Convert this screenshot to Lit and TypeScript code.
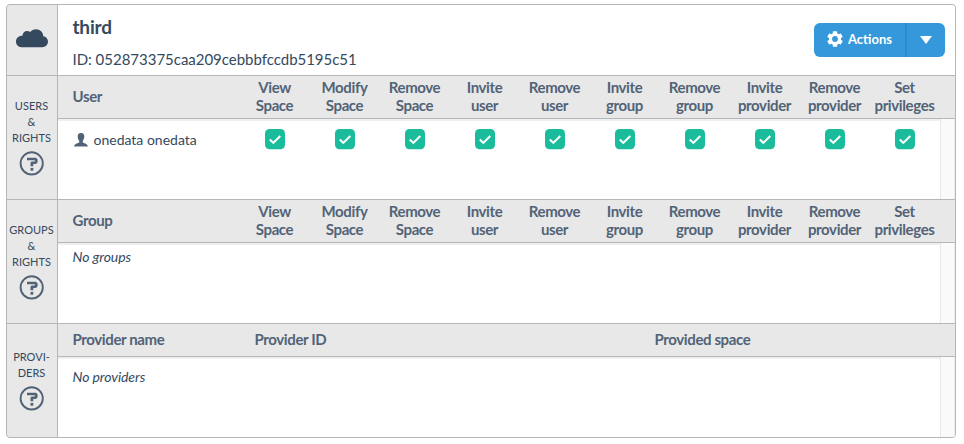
import { LitElement, html, svg, css } from "lit";
import { customElement } from "lit/decorators.js";

const PRIVILEGES = [
  ["View", "Space"],
  ["Modify", "Space"],
  ["Remove", "Space"],
  ["Invite", "user"],
  ["Remove", "user"],
  ["Invite", "group"],
  ["Remove", "group"],
  ["Invite", "provider"],
  ["Remove", "provider"],
  ["Set", "privileges"],
];

const helpIcon = html`<svg class="help" width="26" height="26" viewBox="0 0 26 26">
  <circle cx="12.700" cy="13.400" r="11.100" fill="none" stroke="#526377" stroke-width="1.900"></circle>
  <path d="M8 7.700H17L18.600 9.300V12.300L17 13.900H14.300V16.200H11.500V12.500L12.700 11.500H15.800V10.200H8Z" fill="#526377"></path>
  <rect x="11.500" y="17.900" width="2.800" height="2.800" fill="#526377"></rect>
</svg>`;

const cloudIcon = html`<svg width="32" height="19" viewBox="0 0 32 19">
  <path fill="#34495e" d="M5.500 18.300C2.300 18.300 0 15.900 0 12.600C0 9.300 2.400 6.700 6.400 6.700C6.800 3.800 8.600 1.900 11 1.900C12.200 1.900 13.300 2.200 14.300 2.900C15.600 1.200 17.600 .2 20 .2C24.100 .2 27.200 3.200 27.300 7.300C30 7.700 32 9.900 32 12.600C32 15.800 29.500 18.300 26.300 18.300Z"></path>
</svg>`;

const userIcon = html`<svg class="person" width="14" height="14" viewBox="0 0 14 14">
  <path fill="#526377" d="M7 0C9.300 0 10.500 1.500 10.300 3.800C10.200 5.600 9.600 6.900 8.800 7.700V9.300C9.100 10.300 13.700 10.500 13.900 13.500H.1C.3 10.500 4.900 10.300 5.200 9.300V7.700C4.400 6.900 3.800 5.600 3.700 3.800C3.500 1.500 4.700 0 7 0Z"></path>
</svg>`;

const teeth = [0, 60, 120, 180, 240, 300].map(
  (a) => svg`<rect x="-2.200" y="-7.800" width="4.400" height="4" rx=".6" transform="rotate(${a})"></rect>`
);
const gearIcon = html`<svg width="16" height="16" viewBox="-8 -8 16 16" fill="#fff">
  ${teeth}
  <circle r="4.500" fill="none" stroke="#fff" stroke-width="3.200"></circle>
</svg>`;

const checkIcon = html`<svg class="check" width="20" height="21" viewBox="0 0 20 21">
  <rect width="20" height="20.300" rx="4.500" fill="#1abc9c"></rect>
  <path d="M4.800 10.500l3.500 3.400 7-6.800" fill="none" stroke="#fff" stroke-width="2.100"></path>
</svg>`;

@customElement("app-root")
export class AppRoot extends LitElement {
  static styles = css`
    :host {
      display: block;
      height: 444px;
      box-sizing: border-box;
      padding: 4px 8px 0 6px;
      background: #fff;
      color: #34495e;
      font: 14px/18px Lato, sans-serif;
    }
    .panel {
      box-sizing: border-box;
      height: 434px;
      border: 1px solid #b4b6b8;
      border-radius: 4px;
      overflow: hidden;
      display: grid;
      grid-template-columns: 50px 1fr;
      grid-template-rows: 70px 123px 123px 113px;
      gap: 1px;
      background: #b4b6b8;
    }
    .side {
      background: #e8e8e8;
      display: flex;
      flex-direction: column;
      align-items: center;
      justify-content: center;
      text-align: center;
      font-size: 11px;
      line-height: 16px;
      padding: 0 1px 2px 0;
    }
    .side.cloud { padding: 0 0 3px; }
    .help { margin-top: 4px; }
    .title {
      background: #fff;
      display: flex;
      justify-content: space-between;
      padding: 0 10px 0 14.500px;
    }
    h1 {
      margin: 10px 0 0;
      font-size: 19px;
      line-height: 24px;
      font-weight: 700;
      letter-spacing: -0.2px;
    }
    .id {
      margin-top: 10px;
      font-size: 15px;
      line-height: 20px;
      letter-spacing: -0.020px;
    }
    .button {
      margin-top: 18px;
      display: flex;
      width: 131px;
      height: 34px;
      border-radius: 6px;
      overflow: hidden;
      background: #3498db;
      color: #fff;
      font-weight: 700;
      font-size: 13px;
    }
    .main {
      width: 91px;
      display: flex;
      align-items: center;
      gap: 5px;
      padding: 0 0 2px 13px;
      box-sizing: border-box;
    }
    .toggle {
      flex: 1;
      display: flex;
      align-items: center;
      justify-content: center;
      border-left: 2px solid #2f89c5;
    }
    .section {
      background: #fff;
      display: flex;
      flex-direction: column;
    }
    .head {
      height: 42px;
      background: #e8e8e8;
      border-bottom: 1px solid #b4b6b8;
      color: #526377;
      font-weight: 700;
      font-size: 15px;
      letter-spacing: -0.38px;
      display: grid;
      align-items: center;
    }
    .grid { grid-template-columns: 182px repeat(10, 70px); }
    .grid > * { text-align: center; }
    .grid > .first { text-align: left; padding-left: 14.500px; }
    .head .cell { margin-left: -1px; margin-top: -2px; }
    .head .first { margin-top: -2px; }
    .head.providers {
      height: 32px;
      grid-template-columns: 182px 400px 1fr;
      padding-left: 14.500px;
    }
    .head.providers > * { margin-top: -2px; }
    .body { flex: 1; display: flex; }
    .content {
      width: 882px;
      border-top: 2px solid #efefef;
      box-sizing: border-box;
    }
    .scroll {
      flex: 1;
      background: #fafafa;
      border-left: 1px solid #e7e7e7;
      border-right: 1px solid #ededed;
    }
    .row { display: grid; align-items: center; padding-top: 8px; }
    .row.grid > .first { display: flex; align-items: center; gap: 6px; padding-left: 15.500px; }
    .check { display: block; margin: 0 auto; }
    .empty { margin: 3px 0 0 14.500px; font-style: italic; letter-spacing: -0.080px; }
    .empty.low { margin-top: 9px; }
  `;

  private head(label: string) {
    return html`<div class="head grid">
      <div class="first">${label}</div>
      ${PRIVILEGES.map(([a, b]) => html`<div class="cell">${a}<br />${b}</div>`)}
    </div>`;
  }

  render() {
    return html`<div class="panel">
      <div class="side cloud">${cloudIcon}</div>
      <div class="title">
        <div>
          <h1>third</h1>
          <div class="id">ID: 052873375caa209cebbbfccdb5195c51</div>
        </div>
        <div class="button">
          <div class="main">${gearIcon}<span>Actions</span></div>
          <div class="toggle">
            <svg width="12" height="8" viewBox="0 0 12 8"><path d="M0 0h12L6 8z" fill="#fff"></path></svg>
          </div>
        </div>
      </div>

      <div class="side">USERS<br />&amp;<br />RIGHTS${helpIcon}</div>
      <div class="section">
        ${this.head("User")}
        <div class="body">
          <div class="content">
            <div class="row grid">
              <div class="first">${userIcon}<span>onedata onedata</span></div>
              ${PRIVILEGES.map(() => html`<div>${checkIcon}</div>`)}
            </div>
          </div>
          <div class="scroll"></div>
        </div>
      </div>

      <div class="side">GROUPS<br />&amp;<br />RIGHTS${helpIcon}</div>
      <div class="section">
        ${this.head("Group")}
        <div class="body">
          <div class="content"><div class="empty">No groups</div></div>
          <div class="scroll"></div>
        </div>
      </div>

      <div class="side">PROVI-<br />DERS${helpIcon}</div>
      <div class="section">
        <div class="head providers">
          <div>Provider name</div>
          <div>Provider ID</div>
          <div>Provided space</div>
        </div>
        <div class="body">
          <div class="content"><div class="empty low">No providers</div></div>
          <div class="scroll"></div>
        </div>
      </div>
    </div>`;
  }
}
